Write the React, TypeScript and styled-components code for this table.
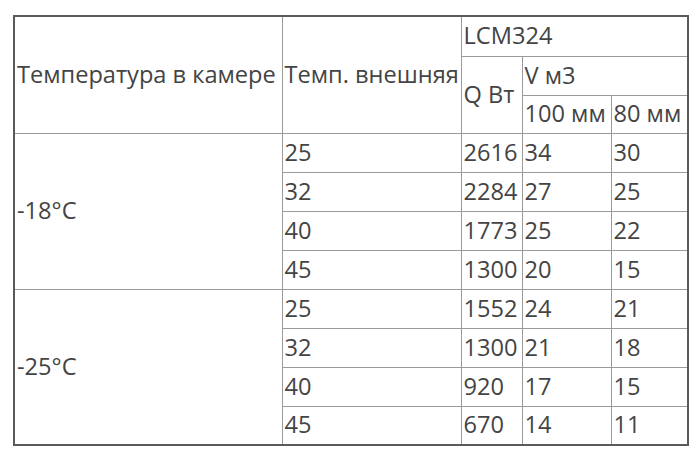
import React from "react";
import styled, { createGlobalStyle } from "styled-components";

const GlobalStyle = createGlobalStyle`
  html, body {
    margin: 0;
    padding: 0;
    background: #ffffff;
  }
  body {
    font-family: "Open Sans", "Noto Sans", sans-serif;
  }
`;

const Page = styled.div`
  width: 700px;
  height: 457px;
  padding: 15px 0 0 13px;
  box-sizing: border-box;
`;

const Table = styled.table`
  border-collapse: collapse;
  table-layout: fixed;
  width: 674px;
  border: 2px solid #5a5a5a;
  color: #444444;
  font-size: 23.6px;
  line-height: 1;
`;

const Cell = styled.td`
  border: 1px solid #9a9a9a;
  padding: 0 0 0 2px;
  text-align: left;
  vertical-align: middle;
  white-space: nowrap;
  overflow: hidden;
`;

const Row = styled.tr<{ $h: number }>`
  height: ${(p) => p.$h}px;
`;

type Group = { temp: string; rows: [string, string, string, string][] };

const groups: Group[] = [
  {
    temp: "-18°C",
    rows: [
      ["25", "2616", "34", "30"],
      ["32", "2284", "27", "25"],
      ["40", "1773", "25", "22"],
      ["45", "1300", "20", "15"],
    ],
  },
  {
    temp: "-25°C",
    rows: [
      ["25", "1552", "24", "21"],
      ["32", "1300", "21", "18"],
      ["40", "920", "17", "15"],
      ["45", "670", "14", "11"],
    ],
  },
];

export default function App() {
  return (
    <>
      <GlobalStyle />
      <Page>
        <Table>
          <colgroup>
            <col style={{ width: 268 }} />
            <col style={{ width: 179 }} />
            <col style={{ width: 61 }} />
            <col style={{ width: 89 }} />
            <col style={{ width: 77 }} />
          </colgroup>
          <tbody>
            <Row $h={40}>
              <Cell rowSpan={3}>Температура в камере</Cell>
              <Cell rowSpan={3}>Темп. внешняя</Cell>
              <Cell colSpan={3}>LCM324</Cell>
            </Row>
            <Row $h={39}>
              <Cell rowSpan={2}>Q Вт</Cell>
              <Cell colSpan={2}>V м3</Cell>
            </Row>
            <Row $h={38}>
              <Cell>100 мм</Cell>
              <Cell>80 мм</Cell>
            </Row>
            {groups.map((g) =>
              g.rows.map((r, i) => (
                <Row $h={39} key={g.temp + i}>
                  {i === 0 && <Cell rowSpan={4}>{g.temp}</Cell>}
                  {r.map((v, j) => (
                    <Cell key={j}>{v}</Cell>
                  ))}
                </Row>
              ))
            )}
          </tbody>
        </Table>
      </Page>
    </>
  );
}
